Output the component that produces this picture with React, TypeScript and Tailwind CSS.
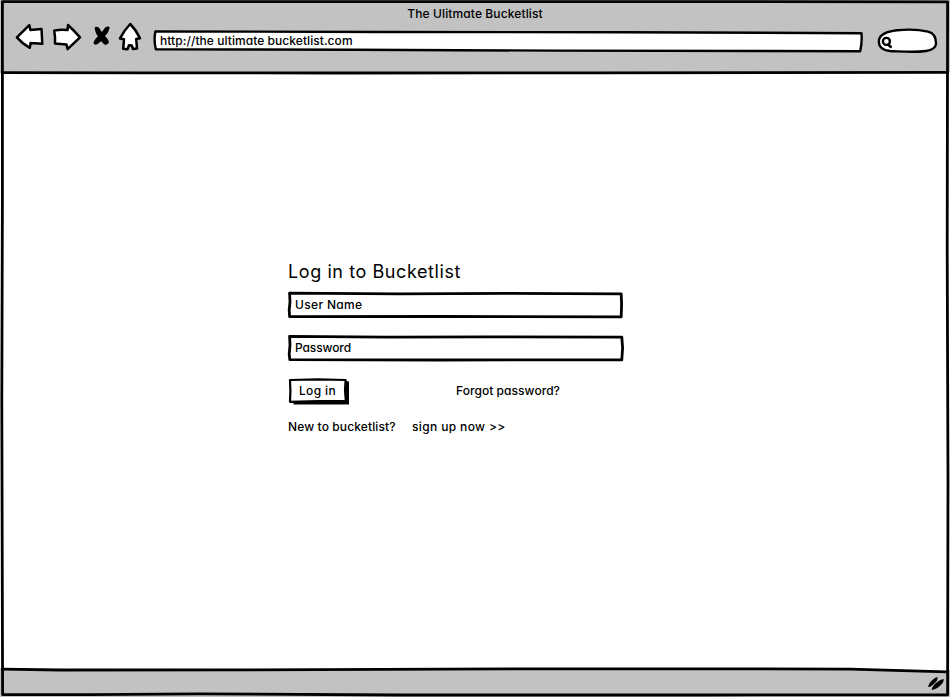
import React from "react";

type SketchProps = { w: number; h: number; children: React.ReactNode };

/* Hand-drawn outline laid over the box that contains it. */
function Outline({ w, h, children }: SketchProps) {
  return (
    <svg
      className="pointer-events-none absolute inset-0 overflow-visible"
      width={w}
      height={h}
      viewBox={`0 0 ${w} ${h}`}
      fill="none"
      stroke="#000"
      strokeWidth="2.8"
      strokeLinejoin="round"
      strokeLinecap="round"
    >
      {children}
    </svg>
  );
}

function NavIcons() {
  return (
    <svg
      className="shrink-0"
      width="130"
      height="30"
      viewBox="14 22 130 30"
      fill="#fff"
      stroke="#000"
      strokeWidth="2.5"
      strokeLinejoin="round"
      strokeLinecap="round"
    >
      <path d="M16.9 37.4 L29.3 25.2 L30.4 29.9 L41.5 28.9 L42.3 43.8 L30.6 43 L29.8 47.8 Q22 43.5 16.9 37.4Z" />
      <path d="M54.2 30.6 Q60 29.2 67.6 30 L68 25 Q74.5 31 80 37.4 L67.6 49.2 L66.4 44.4 L55 43.4 Q55.4 37 54.2 30.6Z" />
      <g fill="#000" stroke="none">
        <path d="M94.6 27.4 Q96.6 25.6 99.2 28 Q101.6 32 104.4 35.4 Q109.2 39.8 108.8 42.8 Q107 45.6 104.4 44.6 Q101.4 42.4 99.6 38.6 Q95 33.4 94.6 27.4Z" />
        <path d="M109.6 27 Q107.4 25.6 105.2 27.6 Q103 30.6 100.8 33.4 Q94.6 38.6 93.4 43 Q94.6 45.6 97.4 44.2 Q101.4 41.6 103.8 37.4 Q109.8 31.4 109.6 27Z" />
      </g>
      <path d="M130.2 24 Q136.2 30 140 38.2 L136.2 39 L137 48.6 L132.9 49 L131.8 45.4 L129 45.2 L127.6 49.2 L123.2 48.8 L124 39.2 L120 38.4 Q124.4 30 130.2 24Z" />
    </svg>
  );
}

type FieldProps = { label: string; wide?: boolean; spacing: string };

function Field({ label, wide, spacing }: FieldProps) {
  return (
    <div className="relative flex h-[26px] w-[335px] items-center bg-white pl-[7px]">
      <Outline w={335} h={26}>
        {wide ? (
          <path d="M1.6 1.4 L100 2.2 L200 1.8 L333.8 2.2 L334.6 13 L333.8 24.8 L150 25 L1.8 24.6 L1.2 19 L2 10Z" />
        ) : (
          <path d="M1.6 1.2 L110 1.8 L220 1.4 L333.2 1.9 L333.6 12 L333.2 24.9 L150 24.5 L1.6 24.6 L1.2 18 L2 10Z" />
        )}
      </Outline>
      <span className={`relative ${spacing}`}>{label}</span>
    </div>
  );
}

export default function App() {
  return (
    <div className="relative flex h-[697px] w-[950px] flex-col overflow-hidden bg-white font-['Inter','Noto_Sans',sans-serif] text-[12px] leading-4 font-medium whitespace-nowrap text-black [font-feature-settings:'cv11'_1]">
      <header className="h-[72px] shrink-0 bg-[#c2c2c2] pt-[6px]">
        <h1 className="text-center tracking-[0.12px]">The Ulitmate Bucketlist</h1>
        <div className="flex pl-[14px]">
          <NavIcons />
          <div className="relative mt-[8px] ml-[9px] flex h-[22px] w-[710px] items-center pl-[7px]">
            <Outline w={710} h={22}>
              <path
                fill="#fff"
                strokeWidth="2.4"
                d="M2.4 1.4 L230 2 L470 2.2 L708.4 3.2 Q709.4 11 707.2 21.2 L400 20.6 L200 19.8 L2.8 19.2 Q0.6 10 2.4 1.4Z"
              />
            </Outline>
            <span className="relative tracking-[0.06px]">http://the ultimate bucketlist.com</span>
          </div>
          <svg
            className="mt-[6px] ml-[13px] shrink-0"
            width="62"
            height="26"
            viewBox="876 28 62 26"
            fill="#fff"
            stroke="#000"
            strokeWidth="2.4"
            strokeLinecap="round"
          >
            <path d="M879 40 C880 34 887 31.5 897 30.3 C908 29.2 921 30 928 31.6 C934 33 936.2 38 936 44 C935.6 48 932 50 926 51 C914 52.8 902 51.5 890 51 C883 50.5 878 47 879 40Z" />
            <circle cx="886.4" cy="41.4" r="3.5" />
            <path d="M888.4 44.8 L890.6 46.8" strokeWidth="2.8" />
          </svg>
        </div>
      </header>

      <main className="flex-1 pt-[189px] pl-[288px]">
        <h2 className="text-[18px] leading-[22px] font-normal tracking-[0.58px]">Log in to Bucketlist</h2>
        <form className="mt-[9px]">
          <Field label="User Name" spacing="tracking-[0.34px]" />
          <div className="h-[17px]" />
          <Field label="Password" wide spacing="tracking-[-0.1px]" />
          <div className="mt-[17px] flex items-center">
            <button
              type="button"
              className="relative flex h-[25px] w-[60px] items-center justify-center bg-white"
            >
              <Outline w={60} h={25}>
                <path stroke="none" fill="#000" d="M57 3 L61 3.4 L61 26.6 L5.5 26.6 L5 22 L57 22Z" />
                <path strokeWidth="2.2" fill="#fff" d="M2 2 L30 1.4 L57.6 2 L57 12 L57.8 23 L30 23.2 L2 23.8 L2.4 13Z" />
              </Outline>
              <span className="relative left-[-0.5px] tracking-[0.35px]">Log in</span>
            </button>
            <a className="ml-[108px] tracking-[0.05px]">Forgot password?</a>
          </div>
        </form>
        <p className="mt-[16px] flex">
          <span className="w-[124px] tracking-[0.12px]">New to bucketlist?</span>
          <a className="tracking-[0.36px]">sign up now &gt;&gt;</a>
        </p>
      </main>

      <footer className="flex h-[27px] shrink-0 items-center justify-end bg-[#c2c2c2] pr-[5px]">
        <svg width="18" height="16" viewBox="927 677 18 16" strokeLinecap="round">
          <path d="M928.2 688 Q928.4 684.6 933 680.6 Q936.4 677.6 937.8 678.4 Q937.6 681.6 934.4 684.6 Q930.4 688.6 928.2 688Z" />
          <path d="M931.6 690.6 Q932.2 687.4 936.6 683.6 Q941.6 679.6 944 680.4 Q943.6 684 939.8 687 Q934.4 691.4 931.6 690.6Z" />
        </svg>
      </footer>

      <Outline w={950} h={697}>
        <path stroke="none" fill="#fff" d="M500 669 L700 668.8 L850 669.2 L947 671.8 L947 667 L500 667Z" />
        <path d="M2.4 1.7 L470 1.6 L947.6 1.8 L947.2 250 L948 480 L947.6 694.8 L700 695 L400 695 L200 693.8 L90 694.6 L2.6 694.6 L1.8 400 L2.4 200Z" />
        <path d="M2 72.6 L140 72.8 L340 73 L600 72.8 L947 72.4" />
        <path d="M2 669.2 L60 670 L250 669.8 L520 668.9 L720 668.8 L850 669.2 L947 671.8" />
      </Outline>
    </div>
  );
}
